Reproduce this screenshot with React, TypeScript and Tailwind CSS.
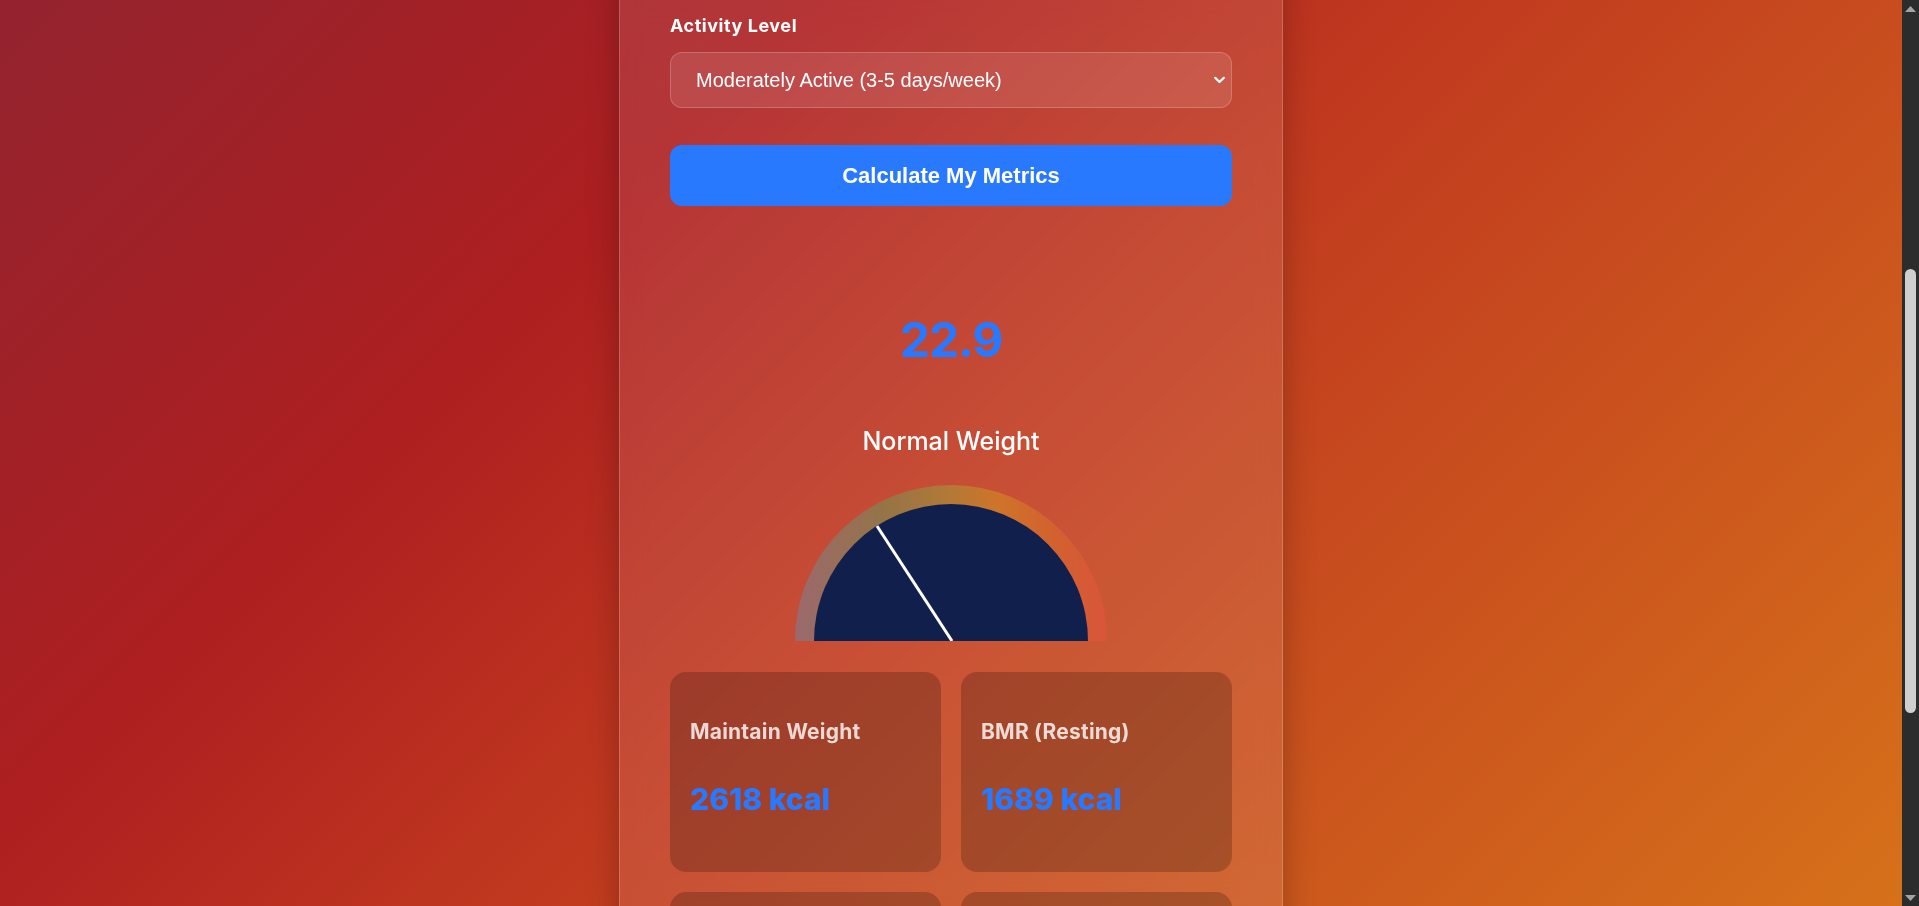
import { useLayoutEffect, useRef } from 'react'

// where the "Activity Level" label sits in the viewport once the page is scrolled
const LABEL_TOP = 14

const results = [
  { title: 'Maintain Weight', value: '2618 kcal' },
  { title: 'BMR (Resting)', value: '1689 kcal' },
  { title: 'Lose Weight', value: '2118 kcal' },
  { title: 'Gain Weight', value: '3118 kcal' },
]

function Chevron() {
  return (
    <svg width="11" height="7" viewBox="0 0 11 7" fill="none">
      <path d="M1.2 1.2 5.5 5.5 9.8 1.2" stroke="white" strokeWidth="2.2" strokeLinecap="round" strokeLinejoin="round" />
    </svg>
  )
}

function Field({ label, children }: { label: string; children: React.ReactNode }) {
  return (
    <div className="mb-[25px]">
      <label className="block mb-[14px] text-[18px] leading-6 tracking-[0.03em] font-bold text-white font-['Inter',sans-serif]">
        {label}
      </label>
      {children}
    </div>
  )
}

function TextInput({ value }: { value: string }) {
  return (
    <input
      defaultValue={value}
      className="w-full h-14 rounded-xl border border-white/20 bg-white/10 pl-[25px] text-[20px] text-white outline-none font-['Liberation_Sans',Arial,sans-serif]"
    />
  )
}

function Gauge() {
  return (
    <svg width="312" height="156" viewBox="0 0 312 156">
      <defs>
        <linearGradient id="ring" x1="0" y1="0" x2="1" y2="0">
          <stop offset="0%" stopColor="#9b696d" />
          <stop offset="28%" stopColor="#947447" />
          <stop offset="50%" stopColor="#b37936" />
          <stop offset="65%" stopColor="#cf7429" />
          <stop offset="82%" stopColor="#d2622e" />
          <stop offset="100%" stopColor="#d9553b" />
        </linearGradient>
      </defs>
      <path d="M0 156 A156 156 0 0 1 312 156 Z" fill="url(#ring)" />
      <path d="M19 156 A137 137 0 0 1 293 156 Z" fill="#111f4d" />
      <line x1="157" y1="156" x2="82" y2="41" stroke="white" strokeWidth="3" />
    </svg>
  )
}

function Scrollbar() {
  return (
    <div className="flex h-screen w-[17px] shrink-0 flex-col items-center bg-[#2c2c2c]">
      <div className="flex h-[17px] items-center justify-center">
        <svg width="11" height="6" viewBox="0 0 11 6">
          <path d="M0 6 5.5 0 11 6Z" fill="#a3a3a3" />
        </svg>
      </div>
      <div className="flex-1">
        <div className="mt-[252px] h-[444px] w-[11px] rounded-full bg-[#cfcfcf]" />
      </div>
      <div className="flex h-[17px] items-center justify-center">
        <svg width="11" height="6" viewBox="0 0 11 6">
          <path d="M0 0 5.5 6 11 0Z" fill="#a3a3a3" />
        </svg>
      </div>
    </div>
  )
}

export default function App() {
  const scrollRef = useRef<HTMLDivElement>(null)
  const labelRef = useRef<HTMLLabelElement>(null)

  useLayoutEffect(() => {
    const box = scrollRef.current
    const label = labelRef.current
    if (!box || !label) return
    const top = label.getBoundingClientRect().top - box.getBoundingClientRect().top + box.scrollTop
    box.scrollTop = Math.round(top - LABEL_TOP)
  }, [])

  return (
    <div className="flex h-screen">
      <div
        ref={scrollRef}
        className="h-screen flex-1 overflow-hidden bg-[linear-gradient(135deg,#93232f_0%,#ae1f20_30%,#c0381f_50%,#c94f1e_70%,#d6711a_100%)]"
      >
        <div className="flex justify-center py-10">
          <div className="w-[664px] rounded-[20px] border border-white/20 bg-white/10 px-[50px] py-[50px] shadow-[0_8px_32px_rgba(0,0,0,0.25)] backdrop-blur-md">
            <header className="mb-10 text-center font-['Inter',sans-serif]">
              <h1 className="text-[32px] font-bold text-white">Health Metrics Calculator</h1>
              <p className="mt-2 text-base text-white/80">Find your BMI and daily calorie needs</p>
            </header>

            <Field label="Age">
              <TextInput value="28" />
            </Field>
            <Field label="Gender">
              <div className="relative">
                <select className="w-full h-14 appearance-none rounded-xl border border-white/20 bg-white/10 pl-[25px] text-[20px] text-white outline-none font-['Liberation_Sans',Arial,sans-serif]">
                  <option>Male</option>
                  <option>Female</option>
                </select>
                <span className="pointer-events-none absolute right-[7px] top-1/2 -translate-y-1/2">
                  <Chevron />
                </span>
              </div>
            </Field>
            <Field label="Height (cm)">
              <TextInput value="178" />
            </Field>
            <Field label="Weight (kg)">
              <TextInput value="72.5" />
            </Field>

            <div className="mb-[37px]">
              <label
                ref={labelRef}
                className="block mb-[14px] text-[18px] leading-6 tracking-[0.03em] font-bold text-white font-['Inter',sans-serif]"
              >
                Activity Level
              </label>
              <div className="relative">
                <select
                  defaultValue="moderate"
                  className="w-full h-14 appearance-none rounded-xl border border-white/20 bg-white/10 pl-[25px] text-[20px] text-white outline-none font-['Liberation_Sans',Arial,sans-serif]"
                >
                  <option value="sedentary">Sedentary (little or no exercise)</option>
                  <option value="light">Lightly Active (1-3 days/week)</option>
                  <option value="moderate">Moderately Active (3-5 days/week)</option>
                  <option value="very">Very Active (6-7 days/week)</option>
                </select>
                <span className="pointer-events-none absolute right-[7px] top-1/2 -translate-y-1/2">
                  <Chevron />
                </span>
              </div>
            </div>

            <button className="w-full h-[61px] rounded-xl bg-[#2979ff] text-[22px] font-bold text-white font-['Liberation_Sans',Arial,sans-serif]">
              Calculate My Metrics
            </button>

            <section className="mt-[110px] flex flex-col items-center font-['Inter',sans-serif]">
              <div className="text-[48px] leading-none tracking-[-0.025em] font-bold text-[#2979ff]">22.9</div>
              <div className="mt-[65px] text-[25px] leading-none font-medium text-white">Normal Weight</div>
              <div className="mt-[31px]">
                <Gauge />
              </div>
            </section>

            <div className="mt-[31px] grid grid-cols-2 gap-5 font-['Inter',sans-serif]">
              {results.map((r) => (
                <div key={r.title} className="h-[200px] rounded-2xl bg-black/20 px-5 pt-[46px]">
                  <h3 className="text-[21px] leading-7 tracking-[0.01em] font-bold text-white/80">{r.title}</h3>
                  <p className="mt-[35px] text-[30px] leading-9 font-extrabold text-[#2979ff]">{r.value}</p>
                </div>
              ))}
            </div>

            <p className="mt-8 text-center text-sm text-white/70 font-['Inter',sans-serif]">
              Results are estimates. Consult a health professional for personal advice.
            </p>
          </div>
        </div>
      </div>
      <Scrollbar />
    </div>
  )
}
